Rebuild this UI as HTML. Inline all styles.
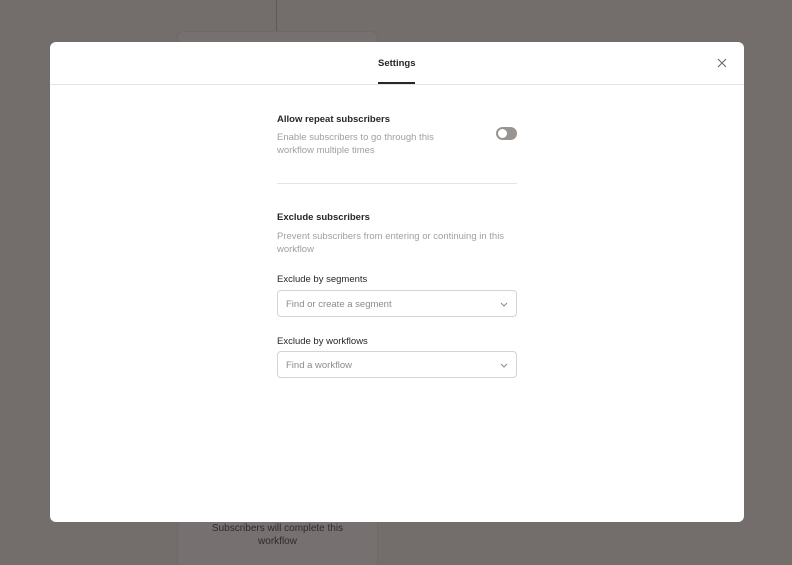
<!DOCTYPE html>
<html><head><meta charset="utf-8"><style>
*{box-sizing:border-box;margin:0;padding:0}
html,body{width:792px;height:565px;overflow:hidden}
body{background:#736e6b;font-family:"Liberation Sans",sans-serif;position:relative}
.vl{position:absolute;left:276px;top:0;width:1px;height:31px;background:#5e5a58}
.card{position:absolute;left:177px;top:31px;width:201px;height:560px;background:#767170;border:1px solid #6d6967;border-radius:6px}
.cardtxt{position:absolute;left:177px;top:522px;width:201px;text-align:center;font-size:10px;line-height:13px;color:#2e2b2a}
.modal{position:absolute;left:50px;top:42px;width:694px;height:480px;background:#fff;border-radius:6px}
.hdr{height:43px;border-bottom:1px solid #e6e4e3;position:relative}
.tab{position:absolute;left:328px;top:16px;font-size:9.5px;color:#2a2625;font-weight:bold}
.ul{position:absolute;left:328px;top:40px;width:37px;height:2px;background:#2a2625}
.x{position:absolute;left:667px;top:16px}
.c{position:absolute;left:227px;width:240px}
.t{font-size:9.5px;font-weight:bold;color:#2a2625}
.d{font-size:9.5px;line-height:13px;color:#a39e9c}
.l{font-size:9.5px;color:#2a2625}
.sel{height:27px;border:1px solid #d6d3d1;border-radius:4px;font-size:9.5px;color:#8f8a88;padding:8px 8px}
.sel svg{position:absolute;right:8px;top:11px}
.tg{position:absolute;left:446px;top:85px;width:21px;height:13px;border-radius:7px;background:#9a9491}
.tg:after{content:"";position:absolute;left:2px;top:2px;width:9px;height:9px;border-radius:50%;background:#fff}
</style></head><body>
<div class="vl"></div><div class="card"></div>
<div class="cardtxt">Subscribers will complete this<br>workflow</div>
<div class="modal">
<div class="hdr"><div class="tab">Settings</div><div class="ul"></div>
<svg class="x" width="10" height="10" viewBox="0 0 10 10"><path d="M1 1L9 9M9 1L1 9" stroke="#6b6665" stroke-width="1.1"/></svg></div>
<div class="c t" style="top:72px">Allow repeat subscribers</div>
<div class="c d" style="top:89px;width:190px">Enable subscribers to go through this workflow multiple times</div>
<div class="tg"></div>
<div class="c" style="top:141px;height:1px;background:#e6e4e3"></div>
<div class="c t" style="top:170px">Exclude subscribers</div>
<div class="c d" style="top:188px">Prevent subscribers from entering or continuing in this workflow</div>
<div class="c l" style="top:232px">Exclude by segments</div>
<div class="c sel" style="top:248px">Find or create a segment<svg width="8" height="5" viewBox="0 0 8 5"><path d="M1 1L4 4L7 1" fill="none" stroke="#8f8a88"/></svg></div>
<div class="c l" style="top:294px">Exclude by workflows</div>
<div class="c sel" style="top:309px">Find a workflow<svg width="8" height="5" viewBox="0 0 8 5"><path d="M1 1L4 4L7 1" fill="none" stroke="#8f8a88"/></svg></div>
</div>
</body></html>
